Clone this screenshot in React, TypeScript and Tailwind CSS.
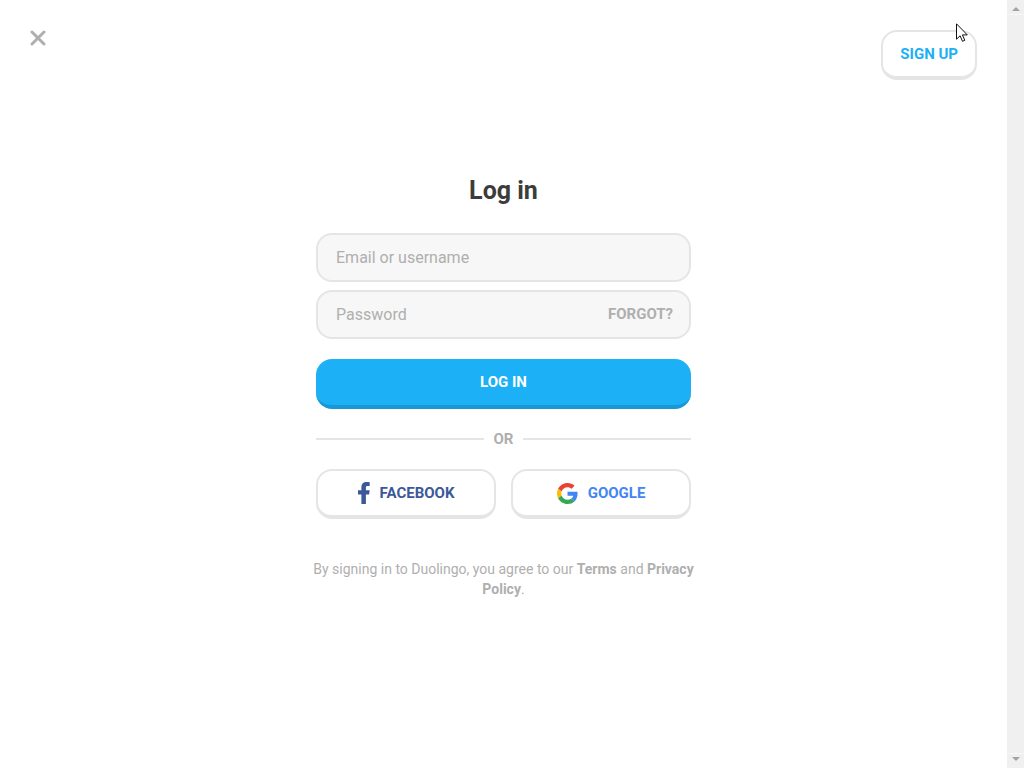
import type { ReactNode } from 'react';

interface SocialButtonProps {
  icon: ReactNode;
  label: string;
  color: string;
}

function SocialButton({ icon, label, color }: SocialButtonProps) {
  return (
    <button
      type="button"
      className={`flex flex-1 h-[50px] items-center justify-center gap-2.5 rounded-2xl border-2 border-b-4 border-[#e5e5e5] bg-white text-[15px] font-bold ${color}`}
    >
      {icon}
      {label}
    </button>
  );
}

function CloseIcon() {
  return (
    <svg viewBox="0 0 16 16" className="h-4 w-4" fill="none" stroke="#afafaf" strokeWidth="3" strokeLinecap="round">
      <path d="M2 2l12 12M14 2L2 14" />
    </svg>
  );
}

function FacebookIcon() {
  return (
    <svg viewBox="0 0 12 22" className="h-[22px] w-3" fill="#3b5998">
      <path d="M3.4 22V12.4H0V8.2h3.4V5.2C3.4 1.8 5.5 0 8.6 0c1.4 0 2.6.1 3.1.2v3.8H9.8C8.2 4 7.9 4.7 7.9 5.7v2.5h3.8l-.6 4.2H7.9V22z" />
    </svg>
  );
}

function GoogleIcon() {
  return (
    <svg viewBox="0 0 48 48" className="h-[21px] w-[21px]">
      <path fill="#ea4335" d="M24 9.5c3.54 0 6.71 1.22 9.21 3.6l6.85-6.85C35.9 2.38 30.47 0 24 0 14.62 0 6.51 5.38 2.56 13.22l7.98 6.19C12.43 13.72 17.74 9.5 24 9.5z" />
      <path fill="#4285f4" d="M46.98 24.55c0-1.57-.15-3.09-.38-4.55H24v9.02h12.94c-.58 2.96-2.26 5.48-4.78 7.18l7.73 6c4.51-4.18 7.09-10.36 7.09-17.65z" />
      <path fill="#fbbc05" d="M10.53 28.59c-.48-1.45-.76-2.99-.76-4.59s.27-3.14.76-4.59l-7.98-6.19C.92 16.46 0 20.12 0 24c0 3.88.92 7.54 2.56 10.78l7.97-6.19z" />
      <path fill="#34a853" d="M24 48c6.48 0 11.93-2.13 15.89-5.81l-7.73-6c-2.15 1.45-4.92 2.3-8.16 2.3-6.26 0-11.57-4.22-13.47-9.91l-7.98 6.19C6.51 42.62 14.62 48 24 48z" />
    </svg>
  );
}

function Cursor() {
  return (
    <svg viewBox="0 0 12 19" className="pointer-events-none absolute -top-[7px] right-[9px] h-[19px] w-3" fill="#fff" stroke="#111" strokeWidth="1">
      <path d="M.5.8v15.4l3.6-3.4 2.4 5.5 2.3-1-2.4-5.4h4.9z" />
    </svg>
  );
}

function ScrollBar() {
  return (
    <div aria-hidden="true" className="flex w-[17px] shrink-0 flex-col justify-between bg-[#f0f0f0]">
      <div className="flex h-[15px] items-center justify-center border-b border-[#f8f8f8] pt-1">
        <svg viewBox="0 0 8 4" className="h-1 w-2" fill="#a3a3a3">
          <path d="M0 4l4-4 4 4z" />
        </svg>
      </div>
      <div className="flex h-[15px] items-center justify-center border-t border-[#f8f8f8] pb-1">
        <svg viewBox="0 0 8 4" className="h-1 w-2" fill="#a3a3a3">
          <path d="M0 0h8L4 4z" />
        </svg>
      </div>
    </div>
  );
}

export default function App() {
  const inputClass =
    'h-[49px] w-full rounded-2xl border-2 border-[#e5e5e5] bg-[#f7f7f7] pl-[18px] text-base text-[#3c3c3c] placeholder:text-[#afafaf] outline-none';

  return (
    <div className="flex min-h-screen bg-white font-[Roboto,'Liberation_Sans',sans-serif]">
      <div className="flex-1">
        <header className="flex items-start justify-between px-[30px] pt-[30px]">
          <button type="button" aria-label="Close">
            <CloseIcon />
          </button>
          <div className="relative">
            <button
              type="button"
              className="h-[50px] rounded-2xl border-2 border-b-4 border-[#e5e5e5] bg-white px-[17px] text-[15px] font-bold text-[#1cb0f6]"
            >
              SIGN UP
            </button>
            <Cursor />
          </div>
        </header>

        <main className="mx-auto mt-[95px] w-full max-w-[375px]">
          <h1 className="text-center text-[25px] leading-8 font-bold text-[#3c3c3c]">Log in</h1>

          <form className="mt-[26px]" onSubmit={(e) => e.preventDefault()}>
            <div className="flex flex-col gap-2">
              <input type="text" aria-label="Email or username" placeholder="Email or username" className={inputClass} />
              <div className="relative">
                <input type="password" aria-label="Password" placeholder="Password" className={`${inputClass} pr-24`} />
                <button type="button" className="absolute inset-y-0 right-[18px] text-[15px] font-bold text-[#afafaf]">
                  FORGOT?
                </button>
              </div>
            </div>
            <button
              type="submit"
              className="mt-5 h-[50px] w-full rounded-2xl border-b-4 border-[#1899d6] bg-[#1cb0f6] text-[15px] font-bold text-white"
            >
              LOG IN
            </button>
          </form>

          <div className="my-5 flex items-center gap-2.5 text-[15px] leading-5 font-bold text-[#afafaf]">
            <div className="h-0.5 flex-1 bg-[#e5e5e5]" />
            OR
            <div className="h-0.5 flex-1 bg-[#e5e5e5]" />
          </div>

          <div className="flex gap-[15px]">
            <SocialButton icon={<FacebookIcon />} label="FACEBOOK" color="text-[#3b5998]" />
            <SocialButton icon={<GoogleIcon />} label="GOOGLE" color="text-[#4285f4]" />
          </div>

          <p className="-mx-2 mt-10 text-center text-sm leading-5 text-[#afafaf]">
            By signing in to Duolingo, you agree to our{' '}
            <a href="#terms" className="font-bold">Terms</a> and{' '}
            <a href="#privacy" className="font-bold">Privacy Policy</a>.
          </p>
        </main>
      </div>
      <ScrollBar />
    </div>
  );
}
